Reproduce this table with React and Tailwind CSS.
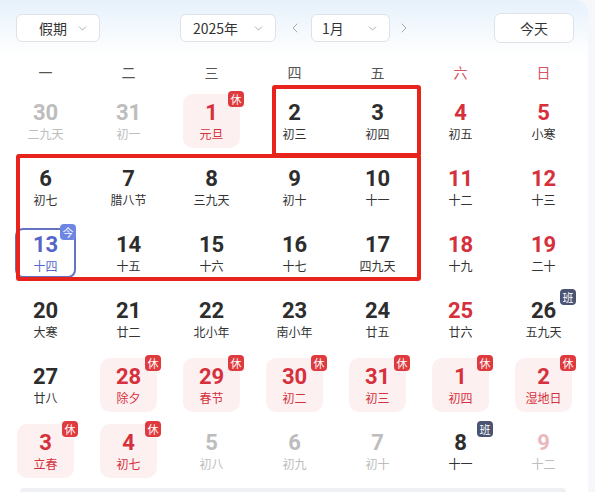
import { ChevronDown, ChevronLeft, ChevronRight } from 'lucide-react';

const weekdays = [
  { t: '一' }, { t: '二' }, { t: '三' }, { t: '四' }, { t: '五' },
  { t: '六', red: true }, { t: '日', red: true },
];

// kind: n normal, w weekend, o other month, h holiday, b workday, t today, p other-month weekend
const rows = [
  [['30', '二九天', 'o'], ['31', '初一', 'o'], ['1', '元旦', 'h'], ['2', '初三', 'n'], ['3', '初四', 'n'], ['4', '初五', 'w'], ['5', '小寒', 'w']],
  [['6', '初七', 'n'], ['7', '腊八节', 'n'], ['8', '三九天', 'n'], ['9', '初十', 'n'], ['10', '十一', 'n'], ['11', '十二', 'w'], ['12', '十三', 'w']],
  [['13', '十四', 't'], ['14', '十五', 'n'], ['15', '十六', 'n'], ['16', '十七', 'n'], ['17', '四九天', 'n'], ['18', '十九', 'w'], ['19', '二十', 'w']],
  [['20', '大寒', 'n'], ['21', '廿二', 'n'], ['22', '北小年', 'n'], ['23', '南小年', 'n'], ['24', '廿五', 'n'], ['25', '廿六', 'w'], ['26', '五九天', 'b']],
  [['27', '廿八', 'n'], ['28', '除夕', 'h'], ['29', '春节', 'h'], ['30', '初二', 'h'], ['31', '初三', 'h'], ['1', '初四', 'h'], ['2', '湿地日', 'h']],
  [['3', '立春', 'h'], ['4', '初七', 'h'], ['5', '初八', 'o'], ['6', '初九', 'o'], ['7', '初十', 'o'], ['8', '十一', 'b'], ['9', '十二', 'p']],
];

const cjk = { fontFamily: '"Noto Sans CJK SC", "Noto Sans", sans-serif' };
const num = { fontFamily: 'Roboto, "Noto Sans", sans-serif' };

function Select({ label, className }) {
  return (
    <div className={`h-[28px] flex items-center justify-between rounded-[6px] border border-[#dfe2e8] bg-white text-[14px] text-[#333] ${className}`}>
      <span>{label}</span>
      <ChevronDown size={13} strokeWidth={1.5} color="#9a9a9a" />
    </div>
  );
}

function Cell({ d }) {
  const [n, lunar, kind] = d;
  const numColor = {
    n: 'text-[#2d2d2d]', b: 'text-[#2d2d2d]', w: 'text-[#d6303c]', h: 'text-[#d6303c]',
    o: 'text-[#bdbdbd]', p: 'text-[#eab7bc]', t: 'text-[#5565c8]',
  }[kind];
  const lunarColor = {
    n: 'text-[#333]', b: 'text-[#333]', w: 'text-[#333]', h: 'text-[#d6303c]',
    o: 'text-[#bdbdbd]', p: 'text-[#bdbdbd]', t: 'text-[#5565c8]',
  }[kind];
  const box = kind === 't'
    ? 'w-[61px] h-[50px] border-2 border-[#6473c4] rounded-[8px]'
    : `w-[57px] h-[54px] rounded-[10px] ${kind === 'h' ? 'bg-[#fdf0f0]' : ''}`;

  return (
    <div className="h-[66px] flex items-center justify-center">
      <div className={`relative flex flex-col items-center justify-center ${box}`}>
        <span className={`text-[22px] font-bold leading-[24px] ${numColor}`} style={num}>{n}</span>
        <span className={`text-[12px] leading-[16px] mt-[1px] ${lunarColor}`} style={cjk}>{lunar}</span>
        {kind === 'h' && (
          <span className="absolute -top-[3px] -right-[4px] w-[16px] h-[16px] rounded-[4px] bg-[#df3a3e] text-white text-[11px] leading-[16px] text-center" style={cjk}>休</span>
        )}
        {kind === 'b' && (
          <span className="absolute -top-[3px] -right-[4px] w-[16px] h-[16px] rounded-[4px] bg-[#4a5472] text-white text-[11px] leading-[16px] text-center" style={cjk}>班</span>
        )}
        {kind === 't' && (
          <span className="absolute -top-[6px] -right-[2px] w-[16px] h-[16px] rounded-[4px] bg-[#6d86e4] text-white text-[11px] leading-[16px] text-center" style={cjk}>今</span>
        )}
      </div>
    </div>
  );
}

export default function App() {
  return (
    <div className="w-[595px] h-[492px] bg-[#f5f7fa] overflow-hidden" style={cjk}>
      <div className="relative w-[588px] h-[492px] rounded-tr-[14px] bg-gradient-to-b from-[#e6f1fb] via-white to-white bg-[length:100%_110px] bg-no-repeat bg-white">
        <div className="h-[56px] flex items-center pl-[16px] pr-[14px]">
          <Select label="假期" className="w-[84px] pl-[22px] pr-[10px]" />
          <Select label="2025年" className="w-[96px] ml-[80px] pl-[12px] pr-[10px]" />
          <ChevronLeft size={16} strokeWidth={1.5} color="#a8a8a8" className="ml-[11px]" />
          <Select label="1月" className="w-[79px] ml-[8px] pl-[10px] pr-[10px]" />
          <ChevronRight size={16} strokeWidth={1.5} color="#a8a8a8" className="ml-[6px]" />
          <div className="ml-auto w-[80px] h-[30px] flex items-center justify-center rounded-[7px] border border-[#dfe2e8] bg-white text-[14px] text-[#333]">今天</div>
        </div>

        <div className="grid grid-cols-7 w-[581px] ml-[4px] h-[32px] items-center">
          {weekdays.map((w) => (
            <div key={w.t} className={`text-center text-[14px] ${w.red ? 'text-[#d9535d]' : 'text-[#555]'}`}>{w.t}</div>
          ))}
        </div>

        <div className="grid grid-cols-7 w-[581px] ml-[4px]">
          {rows.flat().map((d, i) => <Cell key={i} d={d} />)}
        </div>

        <div className="ml-[20px] mr-[22px] mt-[4px] h-[8px] rounded-t-[4px] bg-[#eef0f4]" />

        <div className="absolute left-[272px] top-[85px] w-[149px] h-[72px] border-[4px] border-[#e8231c] rounded-[3px] pointer-events-none" />
        <div className="absolute left-[16px] top-[154px] w-[405px] h-[127px] border-[4px] border-[#e8231c] rounded-[3px] pointer-events-none" />
      </div>
    </div>
  );
}
